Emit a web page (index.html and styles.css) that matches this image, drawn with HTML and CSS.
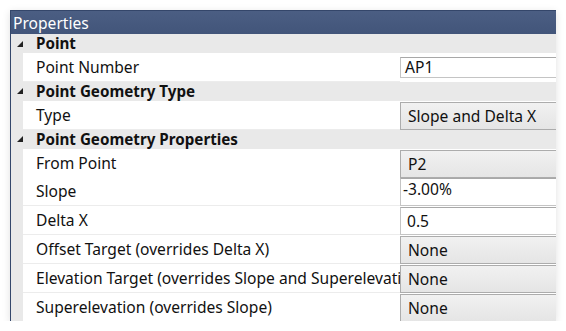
FILE: index.html
```html
<!DOCTYPE html>
<html lang="en">
<head>
    <meta charset="utf-8" />
    <title>Properties</title>
    <link rel="stylesheet" href="styles.css">
</head>
<body>
    <div class="panel">
        <div class="header">Properties</div>

        <div class="cat">
            <span class="gutter"><svg width="6" height="6" viewBox="0 0 6 6"><polygon points="6,0 6,6 0,6" /></svg></span>
            <span class="label">Point</span>
        </div>
        <div class="prop">
            <span class="gutter"></span>
            <span class="name">Point Number</span>
            <span class="val text short">AP1</span>
        </div>

        <div class="cat">
            <span class="gutter"><svg width="6" height="6" viewBox="0 0 6 6"><polygon points="6,0 6,6 0,6" /></svg></span>
            <span class="label">Point Geometry Type</span>
        </div>
        <div class="prop">
            <span class="gutter"></span>
            <span class="name">Type</span>
            <span class="val combo">Slope and Delta X</span>
        </div>

        <div class="cat">
            <span class="gutter"><svg width="6" height="6" viewBox="0 0 6 6"><polygon points="6,0 6,6 0,6" /></svg></span>
            <span class="label">Point Geometry Properties</span>
        </div>
        <div class="prop">
            <span class="gutter"></span>
            <span class="name">From Point</span>
            <span class="val combo">P2</span>
        </div>
        <div class="prop">
            <span class="gutter"></span>
            <span class="name">Slope</span>
            <span class="val text editing">-3.00%</span>
        </div>
        <div class="prop">
            <span class="gutter"></span>
            <span class="name">Delta X</span>
            <span class="val text">0.5</span>
        </div>
        <div class="prop">
            <span class="gutter"></span>
            <span class="name">Offset Target (overrides Delta X)</span>
            <span class="val combo">None</span>
        </div>
        <div class="prop">
            <span class="gutter"></span>
            <span class="name">Elevation Target (overrides Slope and Superelevation)</span>
            <span class="val combo">None</span>
        </div>
        <div class="prop">
            <span class="gutter"></span>
            <span class="name">Superelevation (overrides Slope)</span>
            <span class="val combo">None</span>
        </div>
    </div>
</body>
</html>
```

FILE: styles.css
```css
body {
    margin: 0;
    background: #fff;
    font-family: "Noto Sans", "Open Sans", sans-serif;
    font-size: 15.6px;
    color: #111;
}

.panel {
    width: 545px;
    margin: 10px 0 0 10px;
    border-left: 1px solid #34476b;
    overflow: hidden;
    box-shadow: 0 2px 8px rgba(0, 0, 0, 0.12);
}

.header {
    height: 23px;
    line-height: 24px;
    border-top: 1px solid #34466a;
    background: linear-gradient(#4b5e83, #42557a);
    color: #fff;
    font-size: 15.6px;
    padding-left: 2px;
}

.cat,
.prop {
    display: grid;
    grid-template-columns: 12px 377px 1fr;
}

.cat {
    height: 19px;
    line-height: 19px;
    background: #e9e9e9;
}

.cat .label {
    grid-column: 2 / 4;
    padding-left: 13px;
    font-weight: 700;
    font-size: 15.2px;
}

.gutter {
    background: #e9e9e9;
    display: flex;
    align-items: center;
    justify-content: flex-end;
}

.gutter svg {
    fill: #222;
}

.prop {
    height: 28.8px;
}

.prop .name {
    background: #fff;
    border-bottom: 1px solid #ececec;
    padding-left: 13px;
    line-height: 28px;
    white-space: nowrap;
    overflow: hidden;
}

.val {
    margin-top: 1px;
    height: 26px;
    line-height: 26px;
    padding-left: 6px;
    border: 1px solid #acacac;
    border-right: none;
    white-space: nowrap;
}

.val.combo {
    background: linear-gradient(#f1f1f1, #e5e5e5);
    padding-left: 7px;
}

.val.text {
    background: #fff;
    border-color: #c4c4c4;
    border-top-color: #a8a8a8;
}

.val.short {
    margin-top: 4px;
    height: 19px;
    line-height: 19px;
    padding-left: 4px;
    background: #fff;
}

.val.editing {
    line-height: 20px;
    padding-left: 2px;
}
```
